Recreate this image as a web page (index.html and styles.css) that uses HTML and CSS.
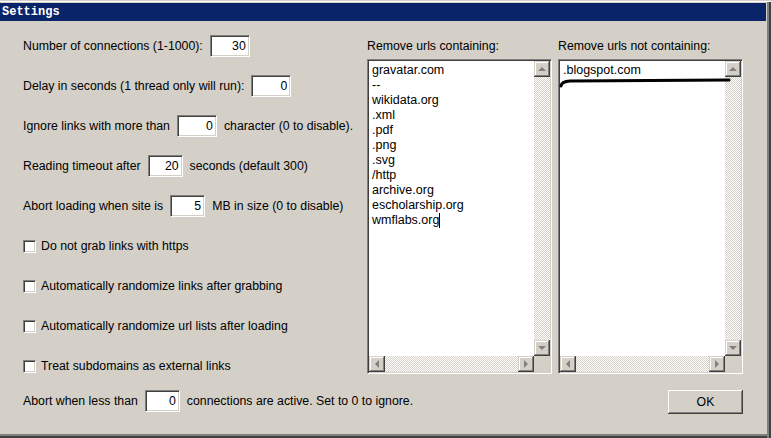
FILE: index.html
```html
<!DOCTYPE html>
<html lang="en">
<head>
    <meta charset="UTF-8">
    <meta name="viewport" content="width=device-width, initial-scale=1.0">
    <title>Settings</title>
    <link rel="stylesheet" href="styles.css">
</head>
<body>
    <div class="window">
        <div class="titlebar">Settings</div>

        <div class="content">
            <div class="options">
                <div class="row">
                    <span>Number of connections (1-1000):</span>
                    <input type="text" class="field" value="30" readonly>
                </div>
                <div class="row">
                    <span>Delay in seconds (1 thread only will run):</span>
                    <input type="text" class="field" value="0" readonly>
                </div>
                <div class="row">
                    <span>Ignore links with more than</span>
                    <input type="text" class="field" value="0" readonly>
                    <span>character (0 to disable).</span>
                </div>
                <div class="row">
                    <span>Reading timeout after</span>
                    <input type="text" class="field small" value="20" readonly>
                    <span>seconds (default 300)</span>
                </div>
                <div class="row">
                    <span>Abort loading when site is</span>
                    <input type="text" class="field small" value="5" readonly>
                    <span>MB in size (0 to disable)</span>
                </div>

                <label class="row check"><input type="checkbox">Do not grab links with https</label>
                <label class="row check"><input type="checkbox">Automatically randomize links after grabbing</label>
                <label class="row check"><input type="checkbox">Automatically randomize url lists after loading</label>
                <label class="row check"><input type="checkbox">Treat subdomains as external links</label>
            </div>

            <div class="list-col">
                <div class="list-label">Remove urls containing:</div>
                <div class="listbox">
                    <div class="list-text">
                        <div>gravatar.com</div>
                        <div>--</div>
                        <div>wikidata.org</div>
                        <div>.xml</div>
                        <div>.pdf</div>
                        <div>.png</div>
                        <div>.svg</div>
                        <div>/http</div>
                        <div>archive.org</div>
                        <div>escholarship.org</div>
                        <div>wmflabs.org<span class="caret"></span></div>
                    </div>
                    <div class="vscroll">
                        <div class="sbtn"><span class="arrow up"></span></div>
                        <div class="track"></div>
                        <div class="sbtn"><span class="arrow down"></span></div>
                    </div>
                    <div class="hscroll">
                        <div class="sbtn"><span class="arrow left"></span></div>
                        <div class="track"></div>
                        <div class="sbtn"><span class="arrow right"></span></div>
                    </div>
                    <div class="corner"></div>
                </div>
            </div>

            <div class="list-col">
                <div class="list-label">Remove urls not containing:</div>
                <div class="listbox">
                    <div class="list-text">
                        <div>.blogspot.com</div>
                    </div>
                    <div class="vscroll">
                        <div class="sbtn"><span class="arrow up"></span></div>
                        <div class="track"></div>
                        <div class="sbtn"><span class="arrow down"></span></div>
                    </div>
                    <div class="hscroll">
                        <div class="sbtn"><span class="arrow left"></span></div>
                        <div class="track"></div>
                        <div class="sbtn"><span class="arrow right"></span></div>
                    </div>
                    <div class="corner"></div>
                    <!-- pen stroke under the first entry -->
                    <svg class="stroke" width="185" height="40" viewBox="0 0 185 40">
                        <path d="M3 27 Q3.5 22.5 12 22 L171 21" fill="none" stroke="#000" stroke-width="3" stroke-linecap="round"/>
                    </svg>
                </div>
            </div>

            <div class="row bottom-row">
                <span>Abort when less than</span>
                <input type="text" class="field small" value="0" readonly>
                <span>connections are active. Set to 0 to ignore.</span>
            </div>
            <button class="ok">OK</button>
        </div>
    </div>
</body>
</html>
```

FILE: styles.css
```css
body {
    margin: 0;
    padding: 0;
    font-family: "Liberation Sans", Arial, sans-serif;
    font-size: 12.3px;
    color: #000;
    background-color: #d4d0c8;
}

.window {
    height: 438px;
    box-sizing: border-box;
    padding: 3px 5px 0 0;
    background-color: #d4d0c8;
    box-shadow: inset 0 1px #d4d0c8, inset 0 2px #ffffff,
                inset -2px 0 #404040, inset -4px 0 #808080,
                inset 0 -2px #404040, inset 0 -4px #808080;
}

.titlebar {
    height: 18px;
    line-height: 18px;
    padding-left: 2px;
    background-color: #0a246a;
    color: #fff;
    font-family: "Liberation Mono", "Courier New", monospace;
    font-weight: bold;
    font-size: 12px;
}

.content {
    display: grid;
    grid-template-columns: 338px 185px 185px;
    column-gap: 6px;
    row-gap: 13px;
    align-items: start;
    padding: 14px 0 0 23px;
}

.options {
    display: flex;
    flex-direction: column;
    gap: 18px;
}

.row {
    display: flex;
    align-items: center;
    gap: 7px;
    height: 22px;
    white-space: nowrap;
}

.field {
    width: 40px;
    height: 22px;
    box-sizing: border-box;
    margin: 0;
    padding: 0 3px 0 0;
    font-family: inherit;
    font-size: 12.3px;
    text-align: right;
    background: #fff;
    border: 1px solid;
    border-color: #808080 #fff #fff #808080;
    box-shadow: inset 1px 1px #404040, inset -1px -1px #d4d0c8;
    outline: none;
}

.field.small {
    width: 35px;
}

.check {
    gap: 5px;
}

.check input {
    appearance: none;
    width: 13px;
    height: 13px;
    margin: 0;
    box-sizing: border-box;
    background: #fff;
    border: 1px solid;
    border-color: #808080 #fff #fff #808080;
    box-shadow: inset 1px 1px #404040, inset -1px -1px #d4d0c8;
}

.list-label {
    height: 22px;
    line-height: 22px;
    margin-bottom: 2px;
}

.listbox {
    position: relative;
    height: 315px;
    box-sizing: border-box;
    display: grid;
    grid-template-columns: 1fr 16px;
    grid-template-rows: 1fr 16px;
    background: #fff;
    border: 1px solid;
    border-color: #808080 #fff #fff #808080;
    padding: 1px;
    box-shadow: inset 1px 1px #404040, inset -1px -1px #d4d0c8;
}

.list-text {
    padding: 2px 0 0 3px;
    font-size: 12.5px;
    line-height: 15px;
    overflow: hidden;
}

.caret {
    display: inline-block;
    width: 1px;
    height: 15px;
    vertical-align: top;
    background: #000;
}

.vscroll,
.hscroll {
    display: flex;
}

.vscroll {
    flex-direction: column;
}

.track {
    flex: 1;
    background: repeating-conic-gradient(#ffffff 0 25%, #d4d0c8 0 50%) 0 0 / 2px 2px;
}

.sbtn {
    width: 16px;
    height: 16px;
    flex: none;
    display: flex;
    align-items: center;
    justify-content: center;
    background: #d4d0c8;
    box-shadow: inset -1px -1px #404040, inset 1px 1px #d4d0c8,
                inset -2px -2px #808080, inset 2px 2px #ffffff;
}

.arrow {
    width: 0;
    height: 0;
    border: 4px solid transparent;
}

.arrow.up {
    border-top: 0;
    border-bottom-color: #808080;
    margin-top: -1px;
}

.arrow.down {
    border-bottom: 0;
    border-top-color: #808080;
}

.arrow.left {
    border-left: 0;
    border-right-color: #808080;
}

.arrow.right {
    border-right: 0;
    border-left-color: #808080;
}

.corner {
    background: #d4d0c8;
}

.stroke {
    position: absolute;
    top: -1px;
    left: -1px;
    pointer-events: none;
}

.bottom-row {
    grid-column: 1 / 3;
}

.ok {
    justify-self: end;
    width: 75px;
    height: 24px;
    margin: 0;
    font-family: inherit;
    font-size: 12.3px;
    color: #000;
    background: #d4d0c8;
    border: none;
    box-shadow: inset -1px -1px #404040, inset 1px 1px #ffffff,
                inset -2px -2px #808080;
    cursor: pointer;
}
```
